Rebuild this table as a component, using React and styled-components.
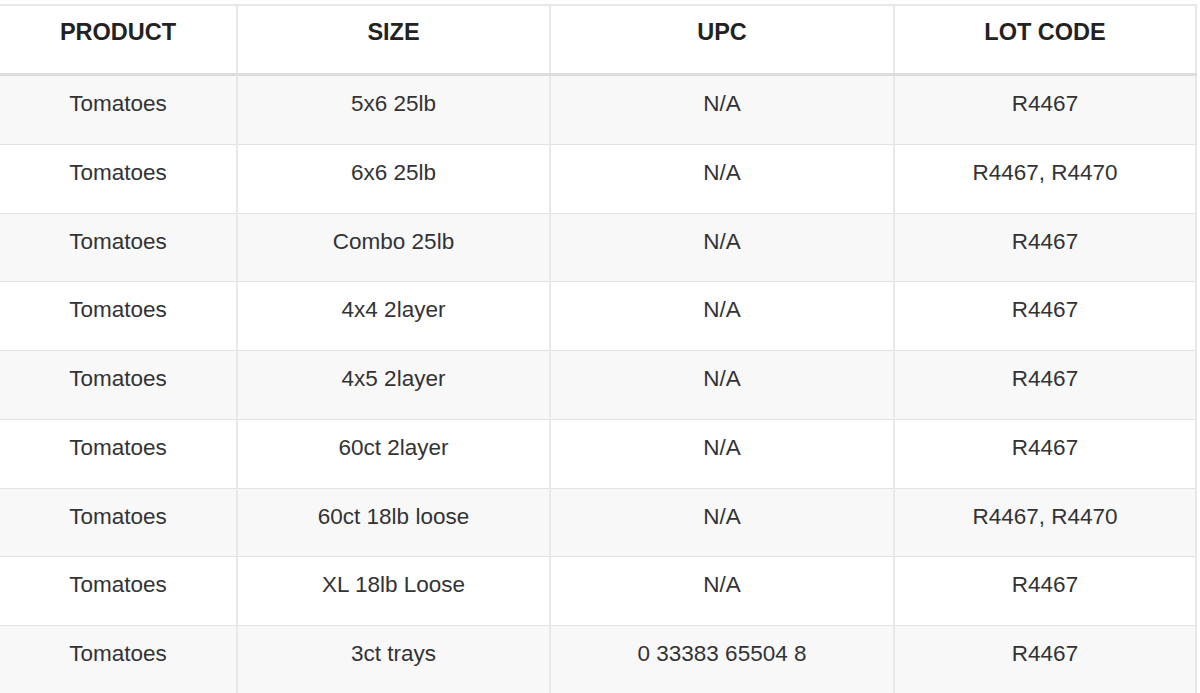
import React from 'react';
import styled, { createGlobalStyle } from 'styled-components';

const GlobalStyle = createGlobalStyle`
  body {
    margin: 0;
    background: #ffffff;
    font-family: "Liberation Sans", Arial, sans-serif;
  }
`;

const rows = [
  ['Tomatoes', '5x6 25lb', 'N/A', 'R4467'],
  ['Tomatoes', '6x6 25lb', 'N/A', 'R4467, R4470'],
  ['Tomatoes', 'Combo 25lb', 'N/A', 'R4467'],
  ['Tomatoes', '4x4 2layer', 'N/A', 'R4467'],
  ['Tomatoes', '4x5 2layer', 'N/A', 'R4467'],
  ['Tomatoes', '60ct 2layer', 'N/A', 'R4467'],
  ['Tomatoes', '60ct 18lb loose', 'N/A', 'R4467, R4470'],
  ['Tomatoes', 'XL 18lb Loose', 'N/A', 'R4467'],
  ['Tomatoes', '3ct trays', '0 33383 65504 8', 'R4467'],
];

const widths = [237, 313, 344, 302];

const Wrapper = styled.div`
  padding-top: 4px;
  width: 1196px;
`;

const Table = styled.table`
  width: 1196px;
  table-layout: fixed;
  border-collapse: collapse;
  border-top: 2px solid #e8e8e8;
  border-right: 2px solid #e8e8e8;
  color: #333333;
`;

const HeadCell = styled.th`
  box-sizing: border-box;
  padding: 13px 8px 27px;
  line-height: 27px;
  font-size: 23.5px;
  font-weight: 700;
  color: #222222;
  text-align: center;
  vertical-align: top;
  border-left: 2px solid #e8e8e8;
  border-bottom: 3px solid #dddddd;
  &:first-child {
    border-left: none;
  }
`;

const Row = styled.tr`
  background: ${(p) => (p.$striped ? '#f8f8f8' : '#ffffff')};
`;

const Cell = styled.td`
  box-sizing: border-box;
  padding: 15px 8px 26.75px;
  line-height: 26px;
  font-size: 22.5px;
  text-align: center;
  vertical-align: top;
  border-left: 2px solid #e8e8e8;
  border-bottom: 1px solid #e2e2e2;
  &:first-child {
    border-left: none;
  }
`;

export default function App() {
  return (
    <Wrapper>
      <GlobalStyle />
      <Table>
        <colgroup>
          {widths.map((w, i) => (
            <col key={i} style={{ width: w }} />
          ))}
        </colgroup>
        <thead>
          <tr>
            <HeadCell>PRODUCT</HeadCell>
            <HeadCell>SIZE</HeadCell>
            <HeadCell>UPC</HeadCell>
            <HeadCell>LOT CODE</HeadCell>
          </tr>
        </thead>
        <tbody>
          {rows.map((r, i) => (
            <Row key={i} $striped={i % 2 === 0}>
              {r.map((c, j) => (
                <Cell key={j}>{c}</Cell>
              ))}
            </Row>
          ))}
        </tbody>
      </Table>
    </Wrapper>
  );
}
